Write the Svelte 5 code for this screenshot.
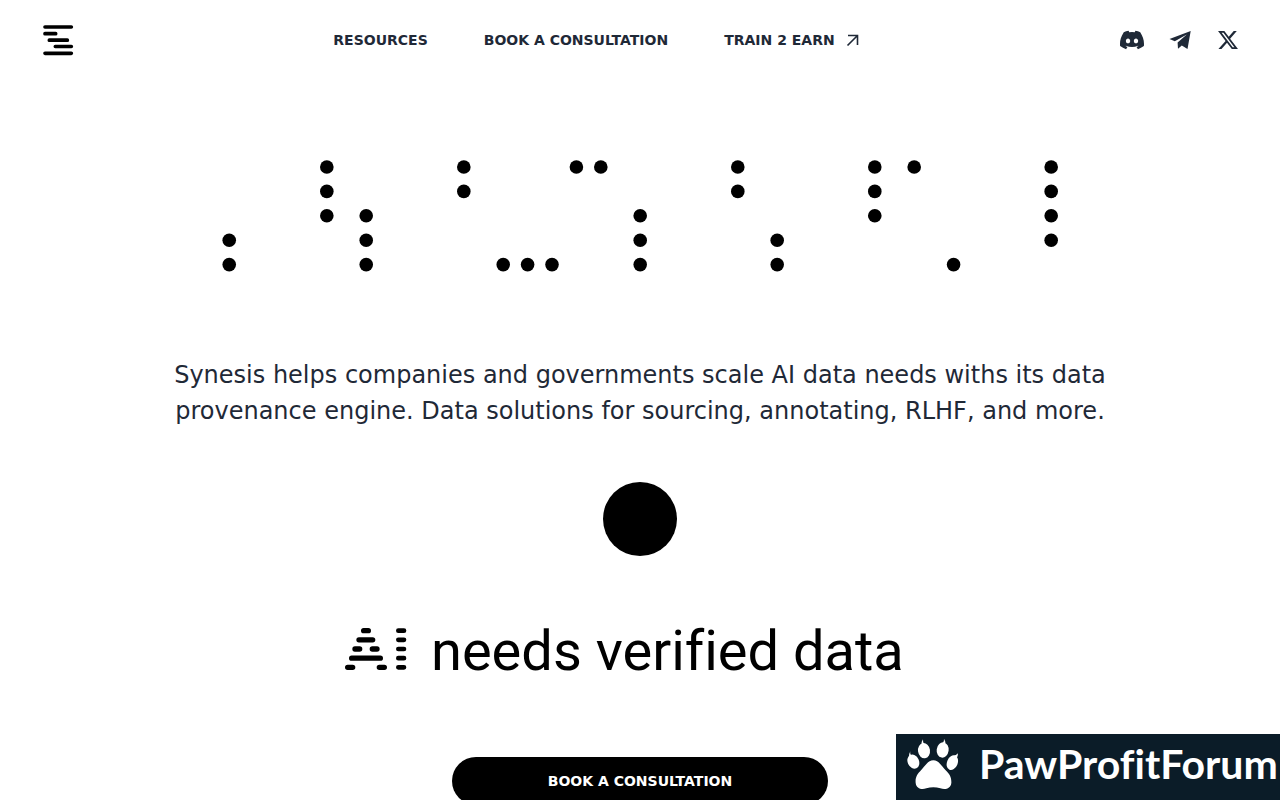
<script>
  const links = [
    { label: 'RESOURCES', href: '#resources' },
    { label: 'BOOK A CONSULTATION', href: '#book' },
    { label: 'TRAIN 2 EARN', href: '#train', external: true },
  ];

  // dot-matrix word: number of columns per letter, and [column, row] of each lit dot
  const letters = [
    { cols: 5, dots: [[0, 3], [0, 4], [4, 0], [4, 1], [4, 2]] },
    { cols: 5, dots: [[0, 2], [0, 3], [0, 4], [4, 0], [4, 1]] },
    { cols: 5, dots: [[0, 4], [1, 4], [2, 4], [3, 0], [4, 0]] },
    { cols: 5, dots: [[0, 2], [0, 3], [0, 4], [4, 0], [4, 1]] },
    { cols: 5, dots: [[0, 3], [0, 4], [4, 0], [4, 1], [4, 2]] },
    { cols: 1, dots: [[0, 0]] },
    { cols: 5, dots: [[0, 4], [4, 0], [4, 1], [4, 2], [4, 3]] },
  ];

  const PITCH = 244;
  const GAP = 394;
  const R = 68;

  let x = 72;
  const dots = letters.flatMap((l) => {
    const start = x;
    x += (l.cols - 1) * PITCH + GAP;
    return l.dots.map(([c, r]) => ({ cx: start + c * PITCH, cy: 70 + r * PITCH }));
  });
</script>

<header>
  <a class="logo" href="#top" aria-label="Synesis">
    <svg viewBox="30 36 108 108" width="36" height="36">
      <path d="M45 51H124M45 71H77M58 90.500H112M76 109.500H124M45 130H124" stroke="#000" stroke-width="11" stroke-linecap="round" />
    </svg>
  </a>

  <nav>
    {#each links as link}
      <a href={link.href}>
        {link.label}
        {#if link.external}
          <svg viewBox="0 0 20 20" width="20" height="20" fill="none" stroke="currentColor" stroke-width="1.600">
            <path d="M4.500 15.500L14.500 5.500M5 5.500H14.500V15" />
          </svg>
        {/if}
      </a>
    {/each}
  </nav>

  <div class="social">
    <a href="#discord" aria-label="Discord">
      <svg viewBox="0 0 24 24" width="24" height="24" fill="currentColor">
        <path d="M20.317 4.37a19.791 19.791 0 0 0-4.885-1.515.074.074 0 0 0-.079.037c-.21.375-.444.864-.608 1.25a18.27 18.27 0 0 0-5.487 0 12.64 12.64 0 0 0-.617-1.25.077.077 0 0 0-.079-.037A19.736 19.736 0 0 0 3.677 4.37a.07.07 0 0 0-.032.027C.533 9.046-.32 13.58.099 18.057a.082.082 0 0 0 .031.057 19.9 19.9 0 0 0 5.993 3.03.078.078 0 0 0 .084-.028c.462-.63.874-1.295 1.226-1.994a.076.076 0 0 0-.041-.106 13.107 13.107 0 0 1-1.872-.892.077.077 0 0 1-.008-.128c.126-.094.252-.192.372-.292a.074.074 0 0 1 .077-.01c3.928 1.793 8.18 1.793 12.062 0a.074.074 0 0 1 .078.01c.12.098.246.198.373.292a.077.077 0 0 1-.006.127 12.3 12.3 0 0 1-1.873.892.077.077 0 0 0-.041.107c.36.698.772 1.362 1.225 1.993a.076.076 0 0 0 .084.028 19.839 19.839 0 0 0 6.002-3.03.077.077 0 0 0 .032-.054c.5-5.177-.838-9.674-3.549-13.66a.061.061 0 0 0-.031-.03zM8.02 15.33c-1.183 0-2.157-1.085-2.157-2.419 0-1.333.956-2.419 2.157-2.419 1.21 0 2.176 1.096 2.157 2.42 0 1.333-.956 2.418-2.157 2.418zm7.975 0c-1.183 0-2.157-1.085-2.157-2.419 0-1.333.955-2.419 2.157-2.419 1.21 0 2.176 1.096 2.157 2.42 0 1.333-.946 2.418-2.157 2.418z" />
      </svg>
    </a>
    <a href="#telegram" aria-label="Telegram">
      <svg viewBox="0 0 24 24" width="24" height="24" fill="currentColor">
        <path d="M1.500 11L22.700 2.900 19.500 21 13.800 17.500 10 20.800 9.600 14.600 18.800 6.600 6.800 13.200Z" />
      </svg>
    </a>
    <a href="#x" aria-label="X">
      <svg viewBox="0 0 24 24" width="24" height="24" fill="currentColor">
        <path d="M18.244 2.750h3.058l-6.682 7.637 7.861 10.393h-6.155l-4.821-6.303-5.516 6.303H2.929l7.147-8.169L2.535 2.750h6.311l4.358 5.761zm-1.073 16.200h1.695L7.926 4.484H6.107z" transform="translate(-0.500 .3)" />
      </svg>
    </a>
  </div>
</header>

<main>
  <svg class="matrix" viewBox="0 0 8360 1116" role="img" aria-label="Synesis">
    {#each dots as d}
      <circle cx={d.cx} cy={d.cy} r={R} />
    {/each}
  </svg>

  <p>
    Synesis helps companies and governments scale AI data needs withs its data
    provenance engine. Data solutions for sourcing, annotating, RLHF, and more.
  </p>

  <div class="ball"></div>

  <h1>
    <svg viewBox="45 53 186 126" width="62" height="42" role="img" aria-label="AI">
      <g stroke="#000" stroke-width="16" stroke-linecap="round">
        <path d="M101 61H115M87 88.500H128M75 116H89M127 116H141M65 143.500H151M53 171H68M148 171H163" />
        <path d="M205 61H222M205 88.500H222M205 116H222M205 143.500H222M205 171H222" stroke-width="14" />
      </g>
    </svg>
    <span>needs verified data</span>
  </h1>

  <button type="button">BOOK A CONSULTATION</button>
</main>

<a class="banner" href="#forum">
  <svg viewBox="50 40 156 156" width="52" height="52" fill="#fff">
    <path d="M129 107C112 107 105 124 92 137C82 147 74 158 76 175C78 192 94 196 108 191C122 187 136 187 150 191C165 196 181 192 183 175C184 158 177 147 166 137C153 124 146 107 129 107Z" />
    <ellipse cx="101" cy="78" rx="18" ry="23" transform="rotate(-8 101 78)" />
    <ellipse cx="157" cy="76" rx="18" ry="23" transform="rotate(8 157 76)" />
    <ellipse cx="69" cy="111" rx="17" ry="22" transform="rotate(-25 69 111)" />
    <ellipse cx="186" cy="114" rx="16" ry="23" transform="rotate(22 186 114)" />
    <path d="M94 60Q93 50 98 44Q97 52 102 60ZM157 56Q162 49 161 42Q167 50 164 60ZM56 98Q55 88 60 80Q58 90 65 93ZM191 93Q198 92 203 86Q203 94 199 100Z" />
  </svg>
  <span>PawProfitForum</span>
</a>

<style>
  :global(body) {
    background: #fff;
    color: #1f2937;
    font-family: "DejaVu Sans", sans-serif;
  }

  a {
    color: inherit;
    text-decoration: none;
  }

  svg {
    display: block;
    flex-shrink: 0;
  }

  header {
    display: flex;
    align-items: center;
    justify-content: space-between;
    height: 80px;
    padding: 0 40px;
  }

  nav {
    display: flex;
    gap: 56px;
  }

  nav a {
    display: flex;
    align-items: center;
    gap: 8px;
    font-size: 14px;
    font-weight: 700;
    line-height: 20px;
  }

  .social {
    display: flex;
    gap: 24px;
  }

  main {
    display: flex;
    flex-direction: column;
    align-items: center;
    padding: 80px 24px 0;
  }

  .matrix {
    width: 100%;
    max-width: 836px;
  }

  p {
    max-width: 960px;
    margin: 85px 0 0;
    font-size: 24px;
    line-height: 36px;
    text-align: center;
  }

  .ball {
    width: 74px;
    height: 74px;
    margin-top: 53px;
    border-radius: 50%;
    background: #000;
  }

  h1 {
    display: flex;
    align-items: baseline;
    gap: 24px;
    width: 100%;
    max-width: 590px;
    margin: 63px 0 0;
    color: #000;
    font-family: Roboto, sans-serif;
    font-size: 56px;
    font-weight: 400;
    font-variant-ligatures: none;
    line-height: 64px;
    white-space: nowrap;
  }

  button {
    width: 100%;
    max-width: 376px;
    height: 48px;
    margin-top: 74px;
    border: none;
    border-radius: 24px;
    background: #000;
    color: #fff;
    font-family: inherit;
    font-size: 14px;
    font-weight: 700;
    cursor: pointer;
  }

  .banner {
    position: fixed;
    right: 0;
    bottom: 0;
    display: flex;
    align-items: center;
    gap: 20px;
    box-sizing: border-box;
    width: 384px;
    height: 66px;
    padding: 0 0 6px 11px;
    background: #0b1c28;
    color: #fff;
    font-family: Lato, sans-serif;
    font-size: 41px;
    font-weight: 700;
    font-variant-ligatures: none;
    line-height: 48px;
  }
</style>
